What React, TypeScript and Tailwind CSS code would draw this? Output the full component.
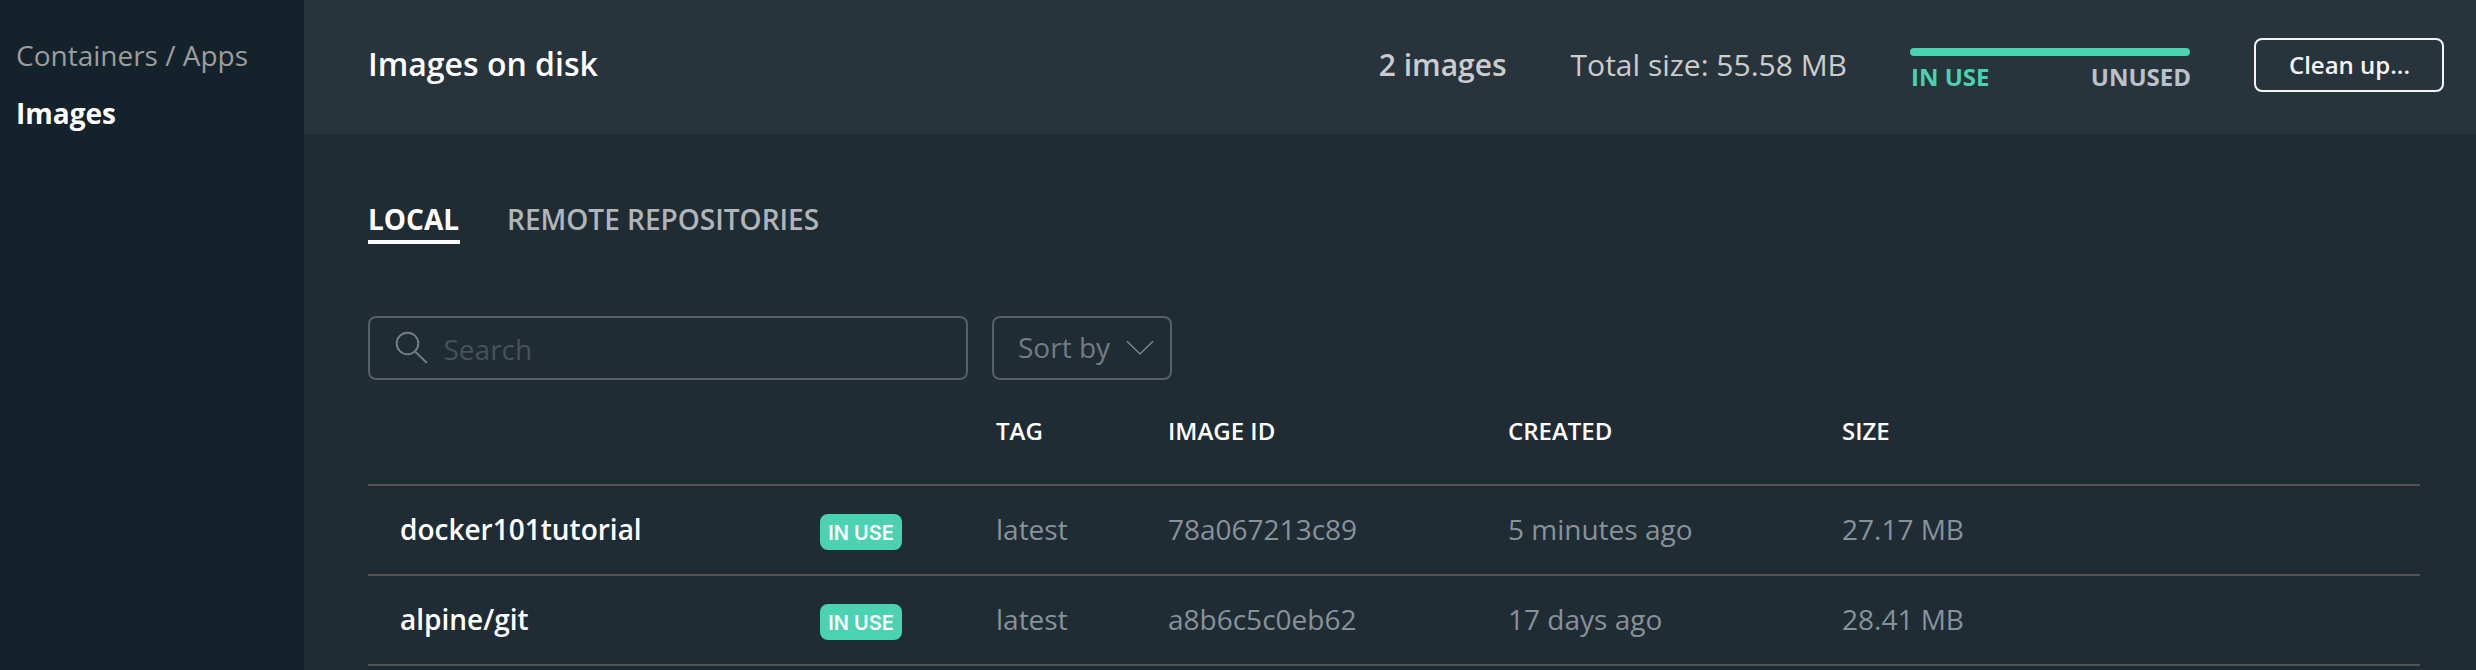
const font = "font-['Open_Sans',sans-serif]";

const images = [
  { name: "docker101tutorial", tag: "latest", id: "78a067213c89", created: "5 minutes ago", size: "27.17 MB" },
  { name: "alpine/git", tag: "latest", id: "a8b6c5c0eb62", created: "17 days ago", size: "28.41 MB" },
];

const columns = "grid grid-cols-[452px_176px_172px_340px_334px_1fr]";

function Sidebar() {
  return (
    <nav className="flex w-[304px] shrink-0 flex-col gap-5 bg-[#14222b] pt-9 pl-4 text-[28px] leading-[38px]">
      <a className="whitespace-nowrap text-[#9d9d9e]">Containers / Apps</a>
      <a className="font-bold text-white">Images</a>
    </nav>
  );
}

function Header() {
  return (
    <header className="flex h-[134px] shrink-0 items-start bg-[#28343c] pr-8 pl-16">
      <h1 className="mt-[42px] text-[32px] leading-[44px] font-semibold text-white">Images on disk</h1>
      <div className="mt-[43px] -mr-px ml-auto flex gap-16 text-[30px] leading-[44px] text-[#cccccc]">
        <span className="font-semibold">2 images</span>
        <span>Total size: 55.58 MB</span>
      </div>
      <div className="mt-12 ml-16 w-[280px]">
        <div className="h-2 rounded-full bg-[#4ad2b1]" />
        <div className="mt-[5px] flex justify-between pl-px text-[24px] leading-8 font-bold">
          <span className="text-[#4ad2b1]">IN USE</span>
          <span className="-mr-px text-[#b9c2cc]">UNUSED</span>
        </div>
      </div>
      <button className="mt-[38px] ml-16 flex h-[54px] w-[190px] justify-center rounded-lg border-2 border-[#f5f3f4] pt-[9px] pl-px text-[24px] leading-8 font-semibold text-[#f5f3f4]">
        Clean up...
      </button>
    </header>
  );
}

function Tabs() {
  return (
    <div className="flex text-[28px] leading-[38px]">
      <span className="mr-[47px] w-[92px] border-b-4 border-white pb-0.5 font-bold text-white">LOCAL</span>
      <span className="font-semibold text-[#b0b5b9]">REMOTE REPOSITORIES</span>
    </div>
  );
}

function Filters() {
  return (
    <div className="mt-[72px] flex gap-6 text-[28px] leading-[38px]">
      <div className="flex h-16 w-[600px] rounded-lg border-2 border-[#586064] pl-[24px]">
        <svg className="mt-[12px] h-9 w-9" viewBox="0 0 36 36" fill="none" stroke="#737d83" strokeWidth="2">
          <circle cx="13.5" cy="13.5" r="10.8" />
          <path d="M21.2 21.6L33 33" />
        </svg>
        <span className="mt-[12px] ml-[13.5px] text-[#47525b]">Search</span>
      </div>
      <div className="flex h-16 w-[180px] justify-between rounded-lg border-2 border-[#586064] pr-4 pl-6">
        <span className="mt-[10px] text-[#747b82]">Sort by</span>
        <svg className="mt-[22px] h-4 w-[28px]" viewBox="0 0 28 16" fill="none" stroke="#879198" strokeWidth="1.2">
          <path d="M1 1.2L14 14L27 1.2" />
        </svg>
      </div>
    </div>
  );
}

function ImageTable() {
  return (
    <div className="mt-[34px] w-[2052px]">
      <div className={`${columns} h-[72px] border-b-2 border-[#555353] pt-px text-[24px] leading-8 font-semibold text-white`}>
        <span />
        <span />
        <span>TAG</span>
        <span>IMAGE ID</span>
        <span>CREATED</span>
        <span>SIZE</span>
      </div>
      {images.map((image) => (
        <div
          key={image.id}
          className={`${columns} h-[90px] border-b-2 border-[#555353] pt-[24px] text-[28px] leading-[38px] text-[#87929a]`}
        >
          <span className="pl-8 font-semibold text-white">{image.name}</span>
          <span className="mt-1 flex h-9 w-[82px] justify-center rounded-lg bg-[#4ad2b1] pt-px font-['Inter',sans-serif] text-[20px] leading-9 font-semibold text-white">
            IN USE
          </span>
          <span>{image.tag}</span>
          <span>{image.id}</span>
          <span>{image.created}</span>
          <span>{image.size}</span>
        </div>
      ))}
    </div>
  );
}

export default function App() {
  return (
    <div className={`${font} flex h-[670px] w-[2476px] overflow-hidden bg-[#202c34]`}>
      <Sidebar />
      <div className="flex min-w-0 flex-1 flex-col">
        <Header />
        <main className="flex-1 pt-[66px] pl-16">
          <div className="flex flex-col">
            <Tabs />
            <Filters />
            <ImageTable />
          </div>
        </main>
      </div>
    </div>
  );
}
